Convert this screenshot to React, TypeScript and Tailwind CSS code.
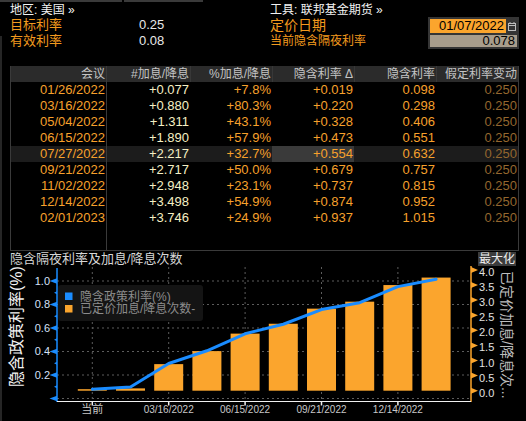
const rows = [
  ["01/26/2022", "+0.077", "+7.8%", "+0.019", "0.098", "0.250"],
  ["03/16/2022", "+0.880", "+80.3%", "+0.220", "0.298", "0.250"],
  ["05/04/2022", "+1.311", "+43.1%", "+0.328", "0.406", "0.250"],
  ["06/15/2022", "+1.890", "+57.9%", "+0.473", "0.551", "0.250"],
  ["07/27/2022", "+2.217", "+32.7%", "+0.554", "0.632", "0.250"],
  ["09/21/2022", "+2.717", "+50.0%", "+0.679", "0.757", "0.250"],
  ["11/02/2022", "+2.948", "+23.1%", "+0.737", "0.815", "0.250"],
  ["12/14/2022", "+3.498", "+54.9%", "+0.874", "0.952", "0.250"],
  ["02/01/2023", "+3.746", "+24.9%", "+0.937", "1.015", "0.250"],
];

const bars = [0, 0.077, 0.88, 1.311, 1.89, 2.217, 2.717, 2.948, 3.498, 3.746];
const rates = [0.078, 0.098, 0.298, 0.406, 0.551, 0.632, 0.757, 0.815, 0.952, 1.015];
const cx = (i: number) => 92.3 + 38.2 * i;
const yL = (v: number) => 398.5 - v * 117.5;
const yR = (v: number) => 390.7 - v * 30.2;

function Chart() {
  const leftTicks = [0, 0.2, 0.4, 0.6, 0.8, 1.0];
  const rightTicks = [0, 0.5, 1, 1.5, 2, 2.5, 3, 3.5, 4];
  const xLabels: [number, string][] = [[0, "当前"], [2, "03/16/2022"], [4, "06/15/2022"], [6, "09/21/2022"], [8, "12/14/2022"]];
  return (
    <svg width="524" height="155" viewBox="2 266 524 155" className="block">
      {/* grid */}
      {leftTicks.map((t) => (
        <line key={"h" + t} x1="57" x2="471" y1={yL(t)} y2={yL(t)} stroke="#5c5c5c" strokeDasharray="2 3" />
      ))}
      {xLabels.map(([i]) => (
        <line key={"v" + i} x1={cx(i)} x2={cx(i)} y1="267" y2="401" stroke="#5c5c5c" strokeDasharray="2 3" />
      ))}

      {/* bars */}
      {bars.map((v, i) => {
        const h = Math.max(v * 30.2, 1.5);
        return <rect key={i} x={cx(i) - 14.5} y={390.7 - h} width="29" height={h} fill="#fba52d" />;
      })}

      {/* implied rate line */}
      <polyline
        points={rates.map((v, i) => `${cx(i)},${yL(v)}`).join(" ")}
        fill="none"
        stroke="#1a8cff"
        strokeWidth="3"
        strokeLinejoin="round"
        strokeLinecap="round"
      />

      {/* left axis */}
      <line x1="57" x2="57" y1="268" y2="402" stroke="#1a8cff" strokeWidth="1.5" />
      {leftTicks.map((t) => (
        <g key={"lt" + t}>
          <polygon points={`57,${yL(t) - 2.7} 57,${yL(t) + 2.7} 49.5,${yL(t)}`} fill="#1a8cff" />
          {t > 0 && (
            <text x="50" y={yL(t) + 3.5} textAnchor="end" fontSize="11" fill="#d6e2fa">
              {t.toFixed(1)}
            </text>
          )}
        </g>
      ))}
      {[0.1, 0.3, 0.5, 0.7, 0.9].map((t) => (
        <polygon key={"m" + t} points={`57,${yL(t) - 1.5} 57,${yL(t) + 1.5} 54,${yL(t)}`} fill="#1a8cff" />
      ))}
      <text x="22" y="387" transform="rotate(-90 22 387)" fontSize="16" fill="#f2f2f2">
        隐含政策利率(%)
      </text>

      {/* right axis */}
      <line x1="471" x2="471" y1="266" y2="402" stroke="#fba52d" strokeWidth="1.5" />
      {rightTicks.map((t) => (
        <g key={"rt" + t}>
          <polygon points={`471,${yR(t) - 3} 471,${yR(t) + 3} 478,${yR(t)}`} fill="#fba52d" />
          <text x="479" y={yR(t) + 6} fontSize="11" fill="#e2e2e2">
            {t.toFixed(1)}
          </text>
        </g>
      ))}
      <text x="502" y="271" transform="rotate(90 502 271)" fontSize="14" fill="#bdbdbd">
        已定价加息/降息次...
      </text>

      {/* x axis */}
      <line x1="57" x2="471" y1="401.5" y2="401.5" stroke="#f0f0f0" strokeWidth="1.2" />
      {xLabels.map(([i, s]) => (
        <g key={"x" + i}>
          <line x1={cx(i)} x2={cx(i)} y1="402" y2="405.5" stroke="#f0f0f0" strokeWidth="1.5" />
          <text x={cx(i)} y="413" textAnchor="middle" fontSize={i === 0 ? 11 : 10} fill="#c8c8c8">
            {s}
          </text>
        </g>
      ))}

      {/* legend */}
      <rect x="58" y="285" width="145" height="36" rx="3" fill="#141414" />
      <rect x="65" y="292.5" width="7.5" height="7.5" fill="#1a8cff" />
      <rect x="65" y="305" width="7.5" height="7.5" fill="#fba52d" />
      <text x="80" y="300.5" fontSize="12" fill="#8c8c8c">隐含政策利率(%)</text>
      <text x="80" y="313" fontSize="12" fill="#8c8c8c">已定价加息/降息次数-</text>
    </svg>
  );
}

export default function App() {
  const cols = "grid grid-cols-[96px_83px_82px_82px_82px_82px] h-[16px] leading-[16px]";
  return (
    <div className="w-[526px] h-[421px] bg-black overflow-hidden flex flex-col font-['Liberation_Sans','Noto_Sans_CJK_SC',sans-serif]">
      <div className="flex h-[2px] shrink-0">
        <div className="w-[122px] bg-[#3a3a3a]" />
        <div className="w-[2px]" />
        <div className="w-[79px] bg-[#3a3a3a]" />
      </div>
      <div className="flex flex-1">
        <div className="w-[2px] flex flex-col">
          <div className="h-[34px]" />
          <div className="flex-1 bg-[#262626]" />
        </div>
        <div className="flex-1 flex flex-col">
          {/* header */}
          <div className="flex pl-[8px] pt-px">
            <div className="w-[260px] flex flex-col">
              <div className="h-[14px] leading-[14px] text-[12px] text-[#f2f2f2]">地区: 美国 »</div>
              <div className="h-[16px] flex items-center">
                <span className="w-[129px] text-[13px] text-[#f39a1e]">目标利率</span>
                <span className="text-[13px] text-[#e8e8e8]">0.25</span>
              </div>
              <div className="h-[16px] flex items-center">
                <span className="w-[129px] text-[13px] text-[#f39a1e]">有效利率</span>
                <span className="text-[13px] text-[#e8e8e8]">0.08</span>
              </div>
            </div>
            <div className="flex flex-col">
              <div className="h-[14px] leading-[14px] text-[12px] text-[#f2f2f2]">工具: 联邦基金期货 »</div>
              <div className="flex">
                <div className="w-[158px] flex flex-col">
                  <div className="h-[16px] flex items-center text-[14px] text-[#f39a1e]">定价日期</div>
                  <div className="h-[16px] flex items-center text-[12px] text-[#f39a1e]">当前隐含隔夜利率</div>
                </div>
                <div className="w-[91px] h-[32px] bg-[#353535] p-[2px] flex flex-col gap-[2px]">
                  <div className="flex h-[14px] gap-px">
                    <div className="w-[76px] bg-[#fba52d] text-black text-[13px] leading-[14px] text-right pr-[2px]">01/07/2022</div>
                    <div className="flex-1 flex items-center justify-center">
                      <svg width="8" height="9" viewBox="0 0 8 9">
                        <rect x="0.5" y="1.5" width="7" height="7" fill="none" stroke="#bdbdbd" />
                        <line x1="0.5" x2="7.5" y1="3.5" y2="3.5" stroke="#bdbdbd" />
                        <line x1="2" x2="2" y1="0" y2="2" stroke="#bdbdbd" />
                        <line x1="6" x2="6" y1="0" y2="2" stroke="#bdbdbd" />
                      </svg>
                    </div>
                  </div>
                  <div className="h-[12px] bg-[#a89d8c] text-black text-[13px] leading-[12px] text-right pr-[2px]">0.078</div>
                </div>
              </div>
            </div>
          </div>

          {/* table */}
          <div className="pl-[8px] mt-[17px]">
            <div className="w-[509px] border-l border-r border-b border-[#3a3a3a]">
              <div className={`${cols} bg-[#2b2b2b] text-[12px] text-[#c4c4c4]`}>
                <div className="border-r border-[#3a3a3a] text-right pr-px">会议</div>
                <div className="text-right pr-px">#加息/降息</div>
                <div className="border-l border-[#383838] text-right pr-px">%加息/降息</div>
                <div className="border-l border-[#383838] text-right pr-px">隐含利率 Δ</div>
                <div className="border-l border-[#383838] text-right pr-px">隐含利率</div>
                <div className="border-l border-[#383838] text-right pr-px">假定利率变动</div>
              </div>
              {rows.map((r, i) => (
                <div key={r[0]} className={`${cols} text-[13px] ${i === 4 ? "bg-[#1c1c1c]" : ""}`}>
                  <div className="border-r border-[#3a3a3a] text-right pr-px text-[#f7a12c]">{r[0]}</div>
                  <div className="text-right pr-px text-[#f5efc4]">{r[1]}</div>
                  <div className="text-right pr-px text-[#f7a12c]">{r[2]}</div>
                  <div className={`text-right pr-px text-[#f7a12c] ${i === 4 ? "bg-[#3a3a3a]" : ""}`}>{r[3]}</div>
                  <div className="text-right pr-px text-[#f7a12c]">{r[4]}</div>
                  <div className="text-right pr-px text-[#94672f]">{r[5]}</div>
                </div>
              ))}
              <div className="h-[24px] flex">
                <div className="w-[96px] border-r border-[#3a3a3a]" />
              </div>
            </div>
          </div>

          {/* chart title */}
          <div className="h-[15px] flex items-center justify-between pl-[8px] pr-[10px]">
            <span className="text-[13px] leading-[15px] text-[#d6d6d6]">隐含隔夜利率及加息/降息次数</span>
            <span className="h-[14px] leading-[14px] px-[1px] bg-[#3c3c3c] text-[12px] text-[#ededed]">最大化</span>
          </div>

          <Chart />
        </div>
      </div>
    </div>
  );
}
